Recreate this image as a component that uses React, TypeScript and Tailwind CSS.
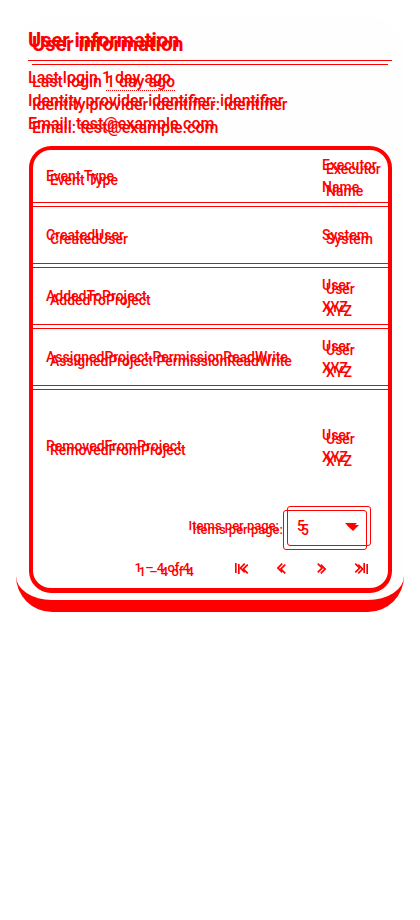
import React from 'react';

const red = '#ff0000';

const rows = [
  { type: 'CreatedUser', who: ['System'], h: 'h-[56px]' },
  { type: 'AddedToProject', who: ['User', 'XYZ'], h: 'h-[56px]' },
  { type: 'AssignedProject PermissionReadWrite', who: ['User', 'XYZ'], h: 'h-[56px]' },
  { type: 'RemovedFromProject', who: ['User', 'XYZ'], h: 'h-[112px]' },
];

const Sep = () => (
  <div className="flex flex-col gap-[3px]">
    <div className="h-px bg-[#ff0000]" />
    <div className="h-px bg-[#ff0000]" />
  </div>
);

const Icon = ({ d }: { d: string }) => (
  <button className="flex h-10 w-10 items-center justify-center">
    <svg viewBox="0 0 24 24" width="20" height="20" fill={red} className="[filter:drop-shadow(3px_1px_0_#ff0000)]">
      <path d={d} />
    </svg>
  </button>
);

export default function App() {
  return (
    <div className="min-h-[920px] bg-white pt-4 font-['Roboto',sans-serif] text-[#ff0000] [text-shadow:4px_4px_0_#ff0000]">
      <div className="mx-4 rounded-[36px] border-b-[12px] border-[#ff0000] bg-[#fefefe] px-3 pt-[10px] pb-[7px]">
        <h1 className="text-[20px] font-bold leading-[28px]">User information</h1>
        <div className="mt-[6px] flex flex-col gap-[3px]">
          <div className="h-px bg-[#ff0000]" />
          <div className="mx-1 h-px bg-[#ff0000]" />
        </div>
        <div className="mt-[1px] text-[16px] font-medium leading-[23px]">
          <p>
            Last login{' '}
            <span className="relative">
              1 day ago
              <span className="absolute left-1 right-[-4px] top-[22px] border-b border-dotted border-[#ff0000]" />
            </span>
          </p>
          <p>Identity provider identifier: identifier</p>
          <p>Email: test@example.com</p>
        </div>

        <div className="mt-[11px] ml-px rounded-[22px] border-x-4 border-t-4 border-b-[5px] border-[#ff0000] bg-white">
          <div className="flex h-[52px] items-center text-[14px] font-medium">
            <div className="flex-1 pl-[13px]">Event Type</div>
            <div className="w-[66px] leading-[22px]">Executor<br />Name</div>
          </div>
          <Sep />
          {rows.map((r, i) => (
            <React.Fragment key={r.type}>
              <div className={`flex items-center text-[14px] font-medium ${r.h}`}>
                <div className="flex-1 pl-[13px]">{r.type}</div>
                <div className="w-[66px] leading-[22px]">
                  {r.who.map((w) => (
                    <div key={w}>{w}</div>
                  ))}
                </div>
              </div>
              {i < rows.length - 1 && <Sep />}
            </React.Fragment>
          ))}

          {/* paginator */}
          <div className="flex flex-col items-end text-[13px] font-medium">
            <div className="mt-1 flex items-center pr-[17px]">
              <span className="mr-[8px]">Items per page:</span>
              <div className="relative h-10 w-[84px]">
                <div className="absolute inset-0 rounded-[3px] border border-[#ff0000]" />
                <div className="absolute left-[-4px] top-1 h-10 w-[84px] rounded-[3px] border border-[#ff0000]" />
                <div className="relative flex h-full items-center justify-between pl-[10px] pr-[14px] text-[14px]">
                  <span>5</span>
                  <svg width="12" height="6" viewBox="0 0 10 5" fill={red} className="[filter:drop-shadow(2px_2px_0_#ff0000)]">
                    <path d="M0 0l5 5 5-5z" />
                  </svg>
                </div>
              </div>
            </div>
            <div className="mt-[2px] flex h-10 items-center pr-2">
              <span className="mr-[30px]">1 – 4 of 4</span>
              <Icon d="M18.41 16.59L13.82 12l4.59-4.59L17 6l-6 6 6 6zM6 6h2v12H6z" />
              <Icon d="M15.41 7.41L14 6l-6 6 6 6 1.41-1.41L10.83 12z" />
              <Icon d="M10 6L8.59 7.41 13.17 12l-4.58 4.59L10 18l6-6z" />
              <Icon d="M5.59 7.41L10.18 12l-4.59 4.59L7 18l6-6-6-6zM16 6h2v12h-2z" />
            </div>
          </div>
        </div>
      </div>
    </div>
  );
}
